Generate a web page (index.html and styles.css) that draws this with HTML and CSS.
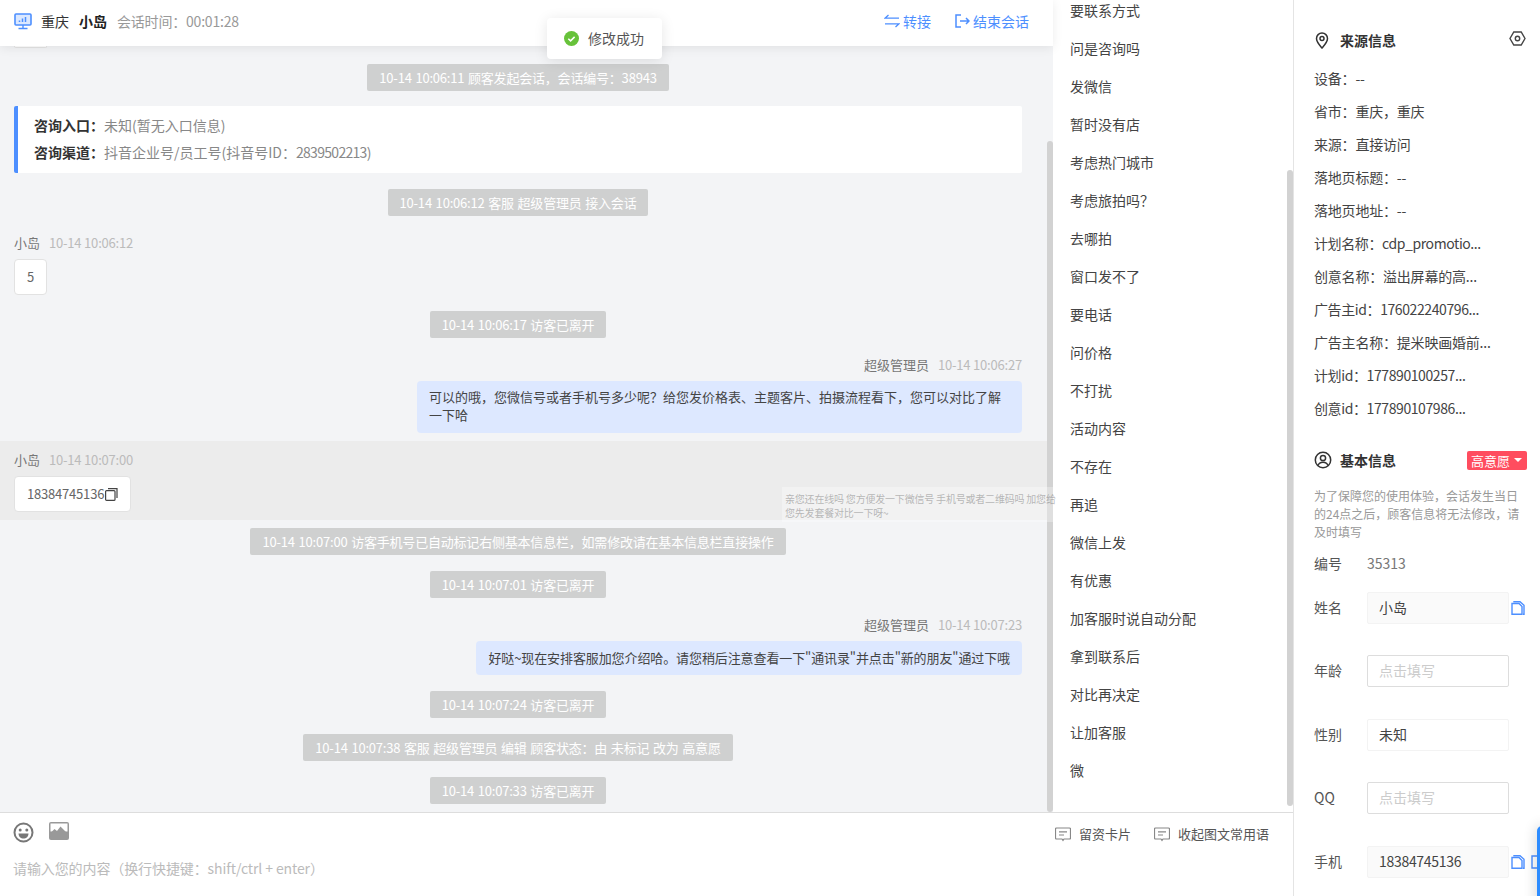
FILE: index.html
```html
<!DOCTYPE html>
<html lang="zh-CN">

<head>
    <meta charset="utf-8" />
    <title>会话</title>
    <link rel="stylesheet" href="styles.css">
</head>

<body>
    <div class="page">
        <div class="workspace">
            <div class="top-area">
                <div class="chat-col">
                    <div class="chat-scroll">
                        <header class="chat-header">
                            <svg class="monitor-icon" width="18" height="17" viewBox="0 0 18 17">
                                <rect x="1" y="1" width="16" height="11" rx="1" fill="#dbe8ff" stroke="#4d8fff" stroke-width="1.6" />
                                <path d="M5.5 9V7.5M8.5 9V5.5M11.5 9V4" stroke="#4d8fff" stroke-width="1.5" />
                                <path d="M9 12v3M4.5 15.5h9" stroke="#4d8fff" stroke-width="1.4" />
                            </svg>
                            <span class="city">重庆</span>
                            <b class="visitor">小岛</b>
                            <span class="timer">会话时间：00:01:28</span>
                            <span class="header-actions">
                                <a class="action">
                                    <svg width="16" height="14" viewBox="0 0 16 14" fill="none" stroke="#4d8fff" stroke-width="1.3">
                                        <path d="M4.5 1L1 4.2h14M11.500 13L15 9.800H1" />
                                    </svg>
                                    转接
                                </a>
                                <a class="action">
                                    <svg width="15" height="14" viewBox="0 0 15 14" fill="none" stroke="#4d8fff" stroke-width="1.5">
                                        <path d="M6 1H1v12h5M5 7h9M11 4l3 3-3 3" />
                                    </svg>
                                    结束会话
                                </a>
                            </span>
                        </header>

                        <div class="messages">
                            <div class="stub-bubble"></div>
                            <div class="sys"><span>10-14 10:06:11 顾客发起会话，会话编号：38943</span></div>

                            <div class="entry-card">
                                <p><b>咨询入口：</b>未知(暂无入口信息)</p>
                                <p><b>咨询渠道：</b>抖音企业号/员工号(抖音号ID：<span class="tight-num">2839502213)</span></p>
                            </div>

                            <div class="sys"><span>10-14 10:06:12 客服 超级管理员 接入会话</span></div>

                            <div class="msg">
                                <div class="msg-meta">小岛<time>10-14 10:06:12</time></div>
                                <div class="bubble">5</div>
                            </div>

                            <div class="sys"><span>10-14 10:06:17 访客已离开</span></div>

                            <div class="msg msg-agent">
                                <div class="msg-meta">超级管理员<time>10-14 10:06:27</time></div>
                                <div class="bubble bubble-agent bubble-multi">可以的哦，您微信号或者手机号多少呢？给您发价格表、主题客片、拍摄流程看下，您可以对比了解一下哈</div>
                            </div>

                            <div class="msg msg-hover">
                                <div class="msg-meta">小岛<time>10-14 10:07:00</time></div>
                                <div class="bubble bubble-phone">18384745136<svg class="copy-small" width="13" height="13" viewBox="0 0 13 13" fill="none" stroke="#444" stroke-width="1.2">
                                        <rect x="0.6" y="2.6" width="9.4" height="9.8" rx="1" />
                                        <path d="M3 .6h9v9.4" />
                                    </svg></div>
                            </div>

                            <div class="sys"><span>10-14 10:07:00 访客手机号已自动标记右侧基本信息栏，如需修改请在基本信息栏直接操作</span></div>
                            <div class="sys"><span>10-14 10:07:01 访客已离开</span></div>

                            <div class="msg msg-agent">
                                <div class="msg-meta">超级管理员<time>10-14 10:07:23</time></div>
                                <div class="bubble bubble-agent bubble-single">好哒~现在安排客服加您介绍哈。请您稍后注意查看一下"通讯录"并点击"新的朋友"通过下哦</div>
                            </div>

                            <div class="sys"><span>10-14 10:07:24 访客已离开</span></div>
                            <div class="sys"><span>10-14 10:07:38 客服 超级管理员 编辑 顾客状态：由 未标记 改为 高意愿</span></div>
                            <div class="sys"><span>10-14 10:07:33 访客已离开</span></div>
                        </div>
                    </div>
                    <div class="scroll-track track-chat"><i></i></div>
                </div>

                <div class="phrase-col">
                    <ul class="phrase-list">
                        <li>要联系方式</li>
                        <li>问是咨询吗</li>
                        <li>发微信</li>
                        <li>暂时没有店</li>
                        <li>考虑热门城市</li>
                        <li>考虑旅拍吗？</li>
                        <li>去哪拍</li>
                        <li>窗口发不了</li>
                        <li>要电话</li>
                        <li>问价格</li>
                        <li>不打扰</li>
                        <li>活动内容</li>
                        <li>不存在</li>
                        <li>再追</li>
                        <li>微信上发</li>
                        <li>有优惠</li>
                        <li>加客服时说自动分配</li>
                        <li>拿到联系后</li>
                        <li>对比再决定</li>
                        <li>让加客服</li>
                        <li>微</li>
                    </ul>
                    <div class="scroll-track track-phrase"><i></i></div>
                </div>
            </div>

            <footer class="composer">
                <div class="composer-bar">
                    <svg width="21" height="21" viewBox="0 0 21 21">
                        <circle cx="10.5" cy="10.5" r="9" fill="none" stroke="#777" stroke-width="2" />
                        <circle cx="7.2" cy="8" r="1.5" fill="#777" />
                        <circle cx="13.8" cy="8" r="1.5" fill="#777" />
                        <path d="M5.5 11.5h10c0 3-2.2 5-5 5s-5-2-5-5z" fill="#777" />
                    </svg>
                    <svg class="img-icon" width="20" height="18" viewBox="0 0 20 18">
                        <rect x="0" y="0" width="20" height="18" rx="2" fill="#999" />
                        <rect x="1.5" y="1.5" width="17" height="8" fill="#fff" />
                        <path d="M1.5 11l4-4 2.5 2 3.5-4.5 7 7v3h-17z" fill="#999" />
                    </svg>
                    <span class="composer-tools">
                        <a class="tool">
                            <svg width="16" height="15" viewBox="0 0 16 15" fill="none" stroke="#888" stroke-width="1.2">
                                <path d="M1.5 1h13a1 1 0 0 1 1 1v9a1 1 0 0 1-1 1H9l-1 1.5L7 12H1.5a1 1 0 0 1-1-1V2a1 1 0 0 1 1-1z" />
                                <path d="M4 4.8h8M4 8h5" />
                            </svg>
                            留资卡片
                        </a>
                        <a class="tool">
                            <svg width="16" height="15" viewBox="0 0 16 15" fill="none" stroke="#888" stroke-width="1.2">
                                <path d="M1.5 1h13a1 1 0 0 1 1 1v9a1 1 0 0 1-1 1H9l-1 1.5L7 12H1.5a1 1 0 0 1-1-1V2a1 1 0 0 1 1-1z" />
                                <path d="M4 4.8h8M4 8h5" />
                            </svg>
                            收起图文常用语
                        </a>
                    </span>
                </div>
                <div class="composer-hint">请输入您的内容（换行快捷键：shift/ctrl + enter）</div>
            </footer>
        </div>

        <aside class="info-panel">
            <div class="panel-title">
                <svg width="16" height="17" viewBox="0 0 16 17" fill="none" stroke="#333" stroke-width="1.5">
                    <path d="M8 16c-3-3.400-5.500-6-5.500-9.500a5.500 5.500 0 0 1 11 0C13.500 10 11 12.600 8 16z" />
                    <circle cx="8" cy="6.500" r="2" />
                </svg>
                <b>来源信息</b>
                <svg class="gear" width="17" height="15" viewBox="0 0 17 15" fill="none" stroke="#444" stroke-width="1.4">
                    <path d="M4.800 1h7.400l3.800 6.500-3.800 6.500H4.800L1 7.500z" />
                    <circle cx="8.500" cy="7.500" r="2.200" />
                </svg>
            </div>
            <ul class="source-list">
                <li>设备：--</li>
                <li>省市：重庆，重庆</li>
                <li>来源：直接访问</li>
                <li>落地页标题：--</li>
                <li>落地页地址：--</li>
                <li class="tight">计划名称：cdp_promotio...</li>
                <li>创意名称：溢出屏幕的高...</li>
                <li class="tight">广告主id：176022240796...</li>
                <li>广告主名称：提米映画婚前...</li>
                <li class="tight">计划id：177890100257...</li>
                <li class="tight">创意id：177890107986...</li>
            </ul>

            <div class="panel-title title-basic">
                <svg width="18" height="18" viewBox="0 0 18 18" fill="none" stroke="#333" stroke-width="1.5">
                    <circle cx="9" cy="9" r="7.700" />
                    <circle cx="9" cy="7" r="2.600" />
                    <path d="M4 14.500c.8-2.400 2.600-3.300 5-3.300s4.200.9 5 3.300" />
                </svg>
                <b>基本信息</b>
                <span class="intent-tag">高意愿<i class="caret"></i></span>
            </div>
            <p class="notice">为了保障您的使用体验，会话发生当日的24点之后，顾客信息将无法修改，请及时填写</p>

            <div class="field field-id"><label>编号</label><span class="field-value">35313</span></div>
            <div class="field">
                <label>姓名</label>
                <div class="input input-filled">小岛</div>
                <svg class="doc-icon" width="14" height="14" viewBox="0 0 14 14" fill="none" stroke="#4d8fff" stroke-width="1.4">
                    <path d="M3 1.500V.8h6l4 3.500v8.900h-1" />
                    <path d="M1 2.500h7l3 3v7.800H1z" fill="#fff" />
                </svg>
            </div>
            <div class="field">
                <label>年龄</label>
                <div class="input input-empty">点击填写</div>
            </div>
            <div class="field">
                <label>性别</label>
                <div class="input input-plain">未知</div>
            </div>
            <div class="field">
                <label>QQ</label>
                <div class="input input-empty">点击填写</div>
            </div>
            <div class="field">
                <label>手机</label>
                <div class="input input-filled input-phone">18384745136</div>
                <svg class="doc-icon" width="14" height="14" viewBox="0 0 14 14" fill="none" stroke="#4d8fff" stroke-width="1.4">
                    <path d="M3 1.500V.8h6l4 3.500v8.900h-1" />
                    <path d="M1 2.500h7l3 3v7.800H1z" fill="#fff" />
                </svg>
                <svg class="doc-icon doc-next" width="14" height="14" viewBox="0 0 14 14" fill="none" stroke="#4d8fff" stroke-width="1.4">
                    <path d="M1 1h12v12H1z" />
                </svg>
            </div>
        </aside>

        <div class="toast">
            <svg width="15" height="15" viewBox="0 0 15 15">
                <circle cx="7.500" cy="7.500" r="7.500" fill="#67c23a" />
                <path d="M4.300 7.700l2.300 2.200 4-4" fill="none" stroke="#fff" stroke-width="1.500" />
            </svg>
            <span>修改成功</span>
        </div>

        <div class="drag-ghost">亲您还在线吗 您方便发一下微信号 手机号或者二维码吗 加您给您先发套餐对比一下呀~</div>
        <div class="side-tab"></div>
    </div>
</body>

</html>
```

FILE: styles.css
```css
* {
    box-sizing: border-box;
}

html,
body {
    margin: 0;
    height: 100%;
    overflow: hidden;
}

body {
    font-family: "Noto Sans CJK SC", "Liberation Sans", sans-serif;
    font-size: 14px;
    line-height: 18px;
    color: #444;
    background: #fff;
}

ul,
p {
    margin: 0;
    padding: 0;
    list-style: none;
}

.page {
    display: flex;
    width: 1540px;
    height: 896px;
    overflow: hidden;
}

.workspace {
    width: 1293px;
    display: flex;
    flex-direction: column;
}

.top-area {
    height: 812px;
    display: flex;
}

/* chat */
.chat-col {
    width: 1053px;
    display: flex;
    background: #f3f4f6;
}

.chat-scroll {
    flex: 1;
    min-width: 0;
}

.chat-header {
    height: 46px;
    display: flex;
    align-items: center;
    padding: 0 24px 4px 14px;
    width: 1053px;
    background: #fff;
    box-shadow: 0 2px 10px rgba(0, 0, 0, 0.08);
    position: relative;
    z-index: 2;
}

.monitor-icon {
    margin-right: 9px;
}

.city {
    color: #333;
}

.visitor {
    margin-left: 10px;
    color: #222;
}

.timer {
    margin-left: 10px;
    color: #999;
    letter-spacing: -0.2px;
}

.header-actions {
    margin-left: auto;
    display: flex;
    gap: 24px;
}

.action {
    display: flex;
    align-items: center;
    gap: 3px;
    color: #4d8fff;
}

.messages {
    display: flex;
    flex-direction: column;
}

.stub-bubble {
    width: 33px;
    height: 2px;
    margin-left: 14px;
    background: #fff;
    border: 1px solid #e3e3e3;
    border-top: 0;
    border-radius: 0 0 4px 4px;
}

.sys {
    display: flex;
    justify-content: center;
    width: 1036px;
    margin-top: 16px;
}

.sys span {
    height: 27px;
    padding: 0 12px;
    font-size: 13px;
    letter-spacing: -0.2px;
    word-spacing: 1px;
    line-height: 27px;
    color: #fff;
    background: #cfd0d0;
    border-radius: 2px;
    white-space: nowrap;
}

.entry-card {
    margin: 15px 25px 0 14px;
    height: 67px;
    padding: 6px 16px;
    background: #fff;
    border-left: 4px solid #4d8fff;
    border-radius: 2px;
    color: #888;
}

.entry-card p {
    line-height: 27px;
}

.entry-card b {
    color: #333;
}

.tight-num {
    letter-spacing: -0.7px;
}

.msg {
    display: flex;
    flex-direction: column;
    align-items: flex-start;
    padding: 18px 25px 0 14px;
}

.msg-agent {
    align-items: flex-end;
}

.msg-hover {
    margin-top: 8px;
    padding-top: 10px;
    padding-bottom: 8px;
    background: #ececec;
}

.msg-hover+.sys {
    margin-top: 8px;
}

.msg-meta {
    display: flex;
    gap: 9px;
    height: 18px;
    font-size: 13px;
    color: #777;
}

.msg-meta time {
    color: #bbb;
    letter-spacing: -0.2px;
}

.bubble {
    display: flex;
    align-items: center;
    margin-top: 7px;
    min-height: 36px;
    padding: 8px 12px;
    background: #fff;
    border: 1px solid #e2e2e2;
    border-radius: 4px;
    font-size: 13px;
    color: #666;
}

.bubble-phone {
    letter-spacing: -0.2px;
}

.copy-small {
    margin-left: 1px;
}

.bubble-agent {
    color: #444;
    background: #dde8ff;
    border: 0;
    max-width: 605px;
    min-height: 34px;
}

.bubble-multi {
    padding: 7px 12px 9px;
}

.bubble-single {
    letter-spacing: -0.1px;
}

/* canned phrases */
.phrase-col {
    width: 240px;
    display: flex;
    overflow: hidden;
}

.phrase-list {
    flex: 1;
    margin-top: -9px;
    padding-left: 17px;
}

.phrase-list li {
    height: 38px;
    line-height: 38px;
    color: #444;
}

.scroll-track {
    width: 6px;
    flex: none;
}

.scroll-track i {
    display: block;
    background: #d2d2d2;
    border-radius: 3px;
}

.track-chat i {
    margin-top: 141px;
    height: 671px;
}

.track-phrase i {
    margin-top: 170px;
    height: 636px;
}

/* input area */
.composer {
    flex: 1;
    border-top: 1px solid #ddd;
    padding: 9px 24px 0 13px;
}

.composer-bar {
    display: flex;
    align-items: flex-start;
}

.img-icon {
    margin-left: 15px;
}

.composer-tools {
    margin-left: auto;
    display: flex;
    gap: 23px;
    padding-top: 3px;
}

.tool {
    display: flex;
    align-items: center;
    gap: 8px;
    font-size: 13px;
    color: #555;
}

.composer-hint {
    margin-top: 16px;
    color: #bbb;
    letter-spacing: -0.1px;
}

/* right panel */
.info-panel {
    width: 247px;
    padding: 0 13px 0 20px;
    border-left: 1px solid #e4e4e4;
    overflow: hidden;
}

.panel-title {
    display: flex;
    align-items: center;
    gap: 10px;
    height: 18px;
    margin-top: 31px;
    color: #333;
}

.panel-title b {
    color: #333;
}

.gear {
    margin: -4px 1px 0 auto;
}

.source-list {
    margin-top: 13px;
}

.source-list li {
    height: 33px;
    line-height: 33px;
    color: #444;
    letter-spacing: -0.2px;
    white-space: nowrap;
}

.source-list .tight {
    letter-spacing: -0.4px;
}

.title-basic {
    margin-top: 26px;
}

.title-basic svg {
    margin-right: -2px;
}

.intent-tag {
    margin-left: auto;
    display: flex;
    align-items: center;
    gap: 4px;
    height: 19px;
    padding: 0 5px 0 4px;
    font-size: 13px;
    color: #fff;
    background: #ff4d5f;
    border-radius: 2px;
    line-height: 19px;
}

.caret {
    width: 0;
    height: 0;
    border: 4px solid transparent;
    border-top-color: #fff;
    border-bottom: 0;
}

.notice {
    margin-top: 18px;
    width: 207px;
    font-size: 12px;
    color: #999;
    line-height: 18px;
}

.field {
    display: flex;
    align-items: center;
    height: 32px;
    margin-bottom: 31.5px;
}

.field-id {
    height: 18px;
    margin-top: 13px;
    margin-bottom: 19.9px;
}

.field label {
    width: 53px;
    flex: none;
    margin-top: -2px;
    color: #555;
}

.field-id label,
.field-id .field-value {
    margin-top: 0;
}

.field-value {
    color: #777;
}

.input {
    width: 142px;
    height: 32px;
    flex: none;
    padding: 0 11px;
    line-height: 28px;
    border: 1px solid #f3f3f3;
    border-radius: 2px;
}

.input-filled {
    background: #fafafa;
}

.input-phone {
    letter-spacing: -0.3px;
}

.input-plain {
    background: #fff;
}

.input-empty {
    border-color: #ddd;
    color: #ccc;
}

.doc-icon {
    flex: none;
    margin-left: 2px;
}

.doc-next {
    margin-left: 6px;
}

/* overlays */
.toast {
    position: absolute;
    left: 547px;
    top: 18px;
    display: flex;
    align-items: center;
    gap: 9px;
    width: 115px;
    height: 41px;
    padding-left: 17px;
    color: #555;
    background: #fff;
    border-radius: 4px;
    box-shadow: 0 2px 14px rgba(0, 0, 0, 0.1);
    z-index: 5;
}

.toast span {
    margin-top: -2px;
}

.drag-ghost {
    position: absolute;
    left: 782px;
    top: 487px;
    width: 278px;
    height: 35px;
    padding: 5px 3px 0;
    overflow: hidden;
    font-size: 10px;
    letter-spacing: -0.2px;
    line-height: 14px;
    color: rgba(120, 120, 120, 0.5);
    background: rgba(255, 255, 255, 0.3);
    z-index: 4;
}

.side-tab {
    position: absolute;
    left: 1537px;
    top: 826px;
    width: 10px;
    height: 80px;
    background: #2d8cff;
    border-radius: 5px 0 0 0;
    box-shadow: 0 0 14px rgba(0, 0, 0, 0.2);
}
```
